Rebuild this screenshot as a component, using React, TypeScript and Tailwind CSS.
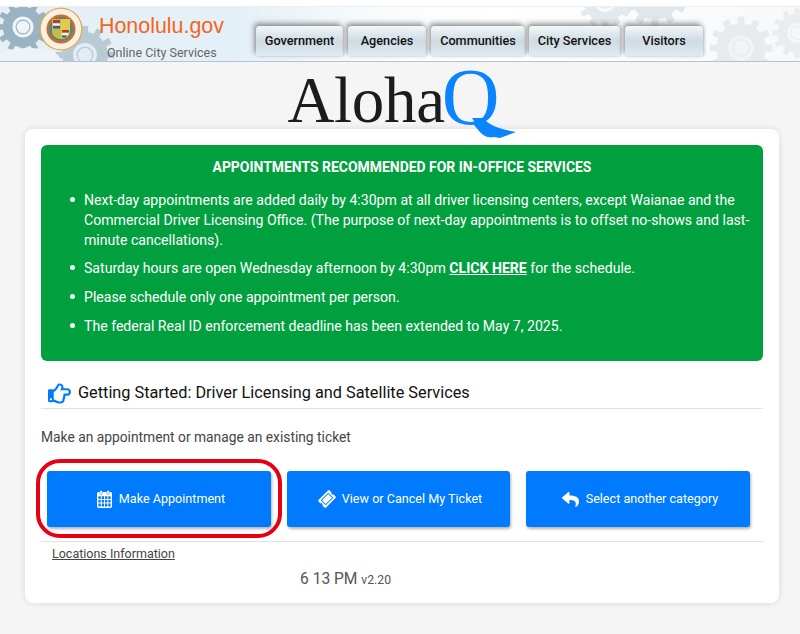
import React from "react";
import { FaRegHandPointRight, FaTicketAlt, FaReply } from "react-icons/fa";

function Gear({ cx, cy, r, color, hole }: { cx: number; cy: number; r: number; color: string; hole: string }) {
  const teeth = Array.from({ length: 12 }, (_, i) => i * 30);
  return (
    <g>
      {teeth.map((a) => (
        <rect key={a} x={cx - r * 0.12} y={cy - r * 1.12} width={r * 0.24} height={r * 0.4} fill={color} transform={`rotate(${a} ${cx} ${cy})`} />
      ))}
      <circle cx={cx} cy={cy} r={r * 0.88} fill={color} />
      <circle cx={cx} cy={cy} r={r * 0.46} fill={hole} />
      <circle cx={cx} cy={cy} r={r * 0.3} fill="none" stroke={color} strokeWidth={r * 0.05} />
    </g>
  );
}

function HeaderArt() {
  return (
    <svg className="absolute inset-0" width="800" height="54" viewBox="0 0 800 54">
      <defs>
        <linearGradient id="hbg" x1="0" x2="1" y1="0" y2="0">
          <stop offset="0" stopColor="#e6eff5" />
          <stop offset="0.3" stopColor="#e4f0f7" />
          <stop offset="0.45" stopColor="#f7fafc" />
          <stop offset="0.62" stopColor="#ffffff" />
          <stop offset="1" stopColor="#f6f8fa" />
        </linearGradient>
      </defs>
      <rect width="800" height="54" fill="url(#hbg)" />
      <Gear cx={23} cy={20} r={23} color="#9ab3c3" hole="#eef4f8" />
      <Gear cx={85} cy={48} r={26} color="#b9cad5" hole="#e4edf3" />
      <ellipse cx="28" cy="52" rx="32" ry="11" fill="#eef3f7" />
      <Gear cx={605} cy={-6} r={24} color="#e4e9ed" hole="#f7f9fa" />
      <Gear cx={655} cy={-14} r={30} color="#e0e6ea" hole="#f0f3f5" />
      <Gear cx={741} cy={41} r={28} color="#e6ebef" hole="#f1f4f6" />
      <Gear cx={797} cy={26} r={22} color="#e9edf0" hole="#f5f7f8" />
    </svg>
  );
}

function Seal() {
  return (
    <svg width="44" height="44" viewBox="0 0 44 44" className="absolute left-[39px] top-[0px]">
      <circle cx="22" cy="22" r="21.5" fill="#e0ab52" />
      <circle cx="22" cy="22" r="20.2" fill="#f6f1e2" />
      <circle cx="22" cy="22" r="14.5" fill="#cf6a2c" />
      <circle cx="22" cy="22" r="11.8" fill="#3c8f8a" />
      <path d="M13 12h9v20c-5 0-9-3-9-8z" fill="#c9b84a" />
      <path d="M22 12h9v12c0 5-4 8-9 8z" fill="#e3c94e" />
      <rect x="14" y="13" width="7" height="3" fill="#b53a3a" />
      <rect x="14" y="16.5" width="7" height="2" fill="#f3f3f3" />
      <rect x="14" y="19" width="7" height="2.5" fill="#3a5a96" />
      <rect x="23" y="23" width="7" height="2.5" fill="#b53a3a" />
      <rect x="23" y="26" width="6" height="2" fill="#f3f3f3" />
      <rect x="23" y="28.5" width="4.5" height="2" fill="#3a5a96" />
    </svg>
  );
}

function Tab({ label, className }: { label: string; className: string }) {
  return (
    <div className={`relative flex h-[30px] items-center justify-center rounded-t-[4px] rounded-b-[2px] bg-gradient-to-b from-[#f3f7f9] via-[#cfdbe3] to-[#dfeaf2] text-[12.7px] font-medium text-[#111] shadow-[-2px_-3px_5px_rgba(70,70,70,0.5),1px_0_3px_rgba(70,70,70,0.3)] ${className}`}>
      {label}
    </div>
  );
}

function ActionButton({ icon, label, className }: { icon: React.ReactNode; label: string; className: string }) {
  return (
    <button className={`flex h-[56px] items-center justify-center gap-[7px] rounded-[3px] bg-[#007bff] pl-[4px] text-[12.6px] text-white shadow-[1px_2px_3px_rgba(0,0,0,0.3)] ${className}`}>
      {icon}
      <span>{label}</span>
    </button>
  );
}

function CalendarIcon() {
  return (
    <svg width="15" height="18" viewBox="0 0 16 18" fill="none" preserveAspectRatio="none">
      <rect x="0.75" y="2.75" width="14.5" height="14.5" rx="1" stroke="#fff" strokeWidth="1.5" />
      <rect x="0.75" y="2.75" width="14.5" height="3.5" fill="#fff" />
      <rect x="3" y="0.5" width="2.5" height="4" rx="1" fill="#fff" stroke="#007bff" strokeWidth="0.5" />
      <rect x="10.5" y="0.5" width="2.5" height="4" rx="1" fill="#fff" stroke="#007bff" strokeWidth="0.5" />
      <path d="M4.5 6v11M8 6v11M11.5 6v11M1 9.5h14M1 13h14" stroke="#fff" strokeWidth="1" />
    </svg>
  );
}

const bullet = "relative before:absolute before:left-[-14px] before:top-[7px] before:h-[5px] before:w-[5px] before:rounded-full before:bg-white";

export default function App() {
  return (
    <div className="h-[634px] w-[800px] overflow-hidden bg-[#f5f5f5] font-['Roboto',sans-serif]">
      <div className="h-[7px] border-b border-[#eeeeee] bg-white" />
      <header className="relative h-[55px] border-b-2 border-[#b4c4cf]">
        <HeaderArt />
        <Seal />
        <div className="relative flex h-full">
          <div className="ml-[99px] w-[157px] shrink-0">
            <div className="mt-[5px] font-['Liberation_Sans',sans-serif] text-[21.4px] leading-[28px] text-[#f26522]">Honolulu.gov</div>
            <div className="ml-[8px] mt-[5px] text-[12.5px] leading-[16px] text-[#666]">Online City Services</div>
          </div>
          <nav className="mt-[19px] flex">
            <Tab label="Government" className="w-[87px]" />
            <Tab label="Agencies" className="ml-[5px] w-[78px]" />
            <Tab label="Communities" className="ml-[5px] w-[94px]" />
            <Tab label="City Services" className="ml-[4px] w-[91px]" />
            <Tab label="Visitors" className="ml-[5px] w-[78px]" />
          </nav>
        </div>
      </header>

      <div className="relative z-10 flex h-[67px] justify-center">
        <div className="relative mr-[13px] flex h-[67px] items-end font-['Liberation_Serif',serif]">
          <span className="mb-[2px] text-[65px] leading-[54px] tracking-[-0.3px] text-[#1c1c1c]">Aloha</span>
          <span className="-ml-[3px] mb-[1px] text-[80px] leading-[62px] text-[#0a84ff]">Q</span>
          <svg className="absolute left-full top-[56px] -ml-[28px]" width="44" height="20" viewBox="0 0 44 20">
            <path d="M0 0L11 0C17 7 27 11 44 14L28 20C16 19 6 10 0 0Z" fill="#0a84ff" />
          </svg>
        </div>
      </div>

      <main className="relative mx-[25px] h-[474px] w-[754px] rounded-[8px] bg-white px-[16px] pt-[16px] shadow-[0_0_6px_rgba(0,0,0,0.12)]">
        <section className="h-[216px] rounded-[6px] bg-[#00a03e] text-white">
          <h1 className="pt-[13px] text-center text-[13.95px] font-bold leading-[18px]">APPOINTMENTS RECOMMENDED FOR IN-OFFICE SERVICES</h1>
          <ul className="ml-[43px] mr-[8px] mt-[14px] list-none text-[14.1px] leading-[20px]">
            <li className={`mb-[8px] ${bullet}`}>Next-day appointments are added daily by 4:30pm at all driver licensing centers, except Waianae and the Commercial Driver Licensing Office. (The purpose of next-day appointments is to offset no-shows and last-minute cancellations).</li>
            <li className={`mb-[9px] ${bullet}`}>Saturday hours are open Wednesday afternoon by 4:30pm <a className="font-bold underline">CLICK HERE</a> for the schedule.</li>
            <li className={`mb-[9px] ${bullet}`}>Please schedule only one appointment per person.</li>
            <li className={bullet}>The federal Real ID enforcement deadline has been extended to May 7, 2025.</li>
          </ul>
        </section>

        <div className="mt-[18px] flex h-[30px] items-center gap-[7px] border-b border-[#e2e2e2] pl-[7px]">
          <FaRegHandPointRight className="h-[23px] w-[23px] text-[#007bff]" />
          <h2 className="text-[16.3px] text-[#111]">Getting Started: Driver Licensing and Satellite Services</h2>
        </div>

        <p className="mt-[19px] text-[13.8px] leading-[18px] text-[#444]">Make an appointment or manage an existing ticket</p>

        <div className="relative mt-[25px] flex gap-[16px] border-b border-[#e2e2e2] px-[6px] pb-[14px]">
          <ActionButton className="w-[224px]" label="Make Appointment" icon={<CalendarIcon />} />
          <ActionButton className="w-[223px]" label="View or Cancel My Ticket" icon={<FaTicketAlt className="h-[16px] w-[16px] -rotate-45" />} />
          <ActionButton className="w-[224px]" label="Select another category" icon={<FaReply className="h-[17px] w-[17px]" />} />
          <div className="absolute left-[-5px] top-[-12px] h-[79px] w-[246px] rounded-[24px] border-4 border-[#e60012]" />
        </div>

        <a className="ml-[11px] mt-[4px] block text-[12.5px] leading-[16px] text-[#444] underline">Locations Information</a>
        <div className="ml-[259px] mt-[7px] text-[15.6px] leading-[20px] text-[#555]">
          6 13 PM <span className="text-[12.2px]">v2.20</span>
        </div>
      </main>
    </div>
  );
}
